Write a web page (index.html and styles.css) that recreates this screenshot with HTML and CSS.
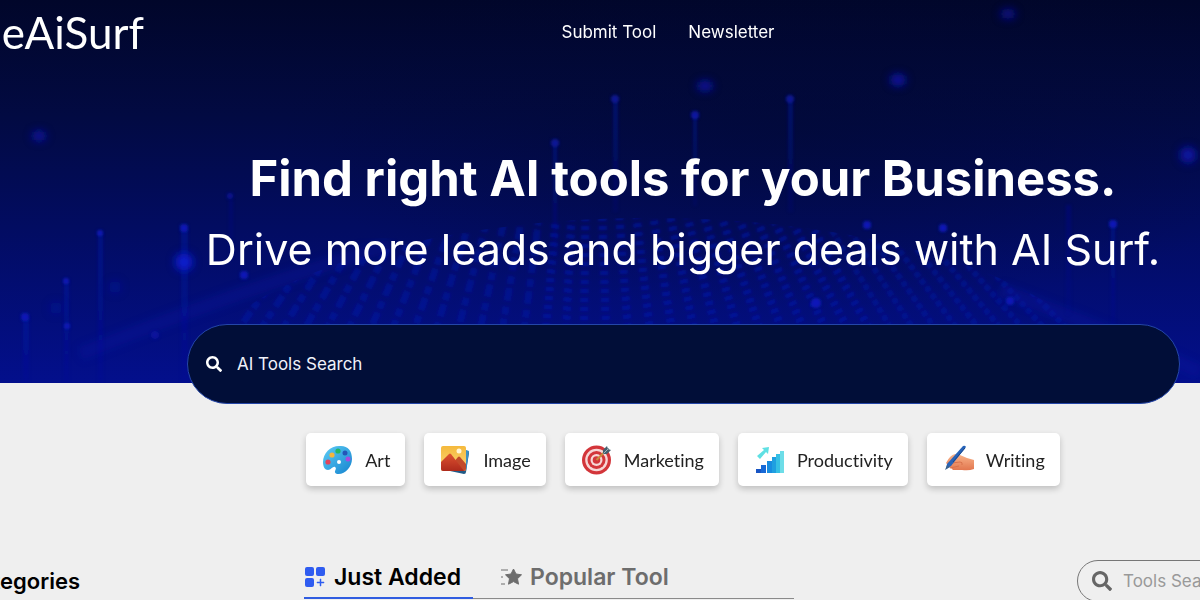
FILE: index.html
```html
<!DOCTYPE html>
<html lang="en">
<head>
    <meta charset="UTF-8">
    <meta name="viewport" content="width=device-width, initial-scale=1.0">
    <title>TheAiSurf</title>
    <link rel="stylesheet" href="styles.css">
</head>
<body>
    <div class="hero">
        <svg class="hero-bg" viewBox="0 0 1200 383" preserveAspectRatio="none" aria-hidden="true">
            <defs>
                <linearGradient id="sky" x1="0" y1="0" x2="0" y2="1">
                    <stop offset="0" stop-color="#01062a"/>
                    <stop offset=".3" stop-color="#020a42"/>
                    <stop offset=".6" stop-color="#020c62"/>
                    <stop offset="1" stop-color="#030f8c"/>
                </linearGradient>
                <radialGradient id="shade">
                    <stop offset="0" stop-color="#010833" stop-opacity=".5"/>
                    <stop offset="1" stop-color="#010833" stop-opacity="0"/>
                </radialGradient>
                <linearGradient id="beam" x1="0" y1="0" x2="0" y2="1">
                    <stop offset="0" stop-color="#0b17b4" stop-opacity=".4"/>
                    <stop offset="1" stop-color="#0b17b4" stop-opacity=".1"/>
                </linearGradient>
                <filter id="soft" x="-5%" y="-5%" width="110%" height="110%"><feGaussianBlur stdDeviation="1.6"/></filter>
                <filter id="glow" x="-5%" y="-5%" width="110%" height="110%"><feGaussianBlur stdDeviation="4"/></filter>
                <clipPath id="hill"><ellipse cx="650" cy="390" rx="460" ry="172"/></clipPath>
            </defs>
            <rect width="1200" height="383" fill="url(#sky)"/>
            <ellipse cx="800" cy="130" rx="520" ry="180" fill="url(#shade)"/>
            <!-- dotted hill -->
            <g clip-path="url(#hill)" filter="url(#soft)" fill="none" stroke="#0918b4">
                <path stroke-width="7" stroke-dasharray="13 6 8 4" opacity=".4" d="M590-170L172 330M590-170L194 330M590-170L216 330M590-170L238 330M590-170L260 330M590-170L282 330M590-170L304 330M590-170L326 330M590-170L348 330M590-170L370 330M590-170L392 330M590-170L414 330M590-170L436 330M590-170L458 330M590-170L480 330M590-170L502 330M590-170L524 330"/>
                <path stroke-width="8" stroke-dasharray="4 5" opacity=".6" d="M590-170L546 330M590-170L566 330M590-170L584 330M590-170L606 330M590-170L628 330M590-170L650 330M590-170L672 330M590-170L694 330M590-170L716 330M590-170L738 330M590-170L760 330M590-170L782 330M590-170L804 330M590-170L826 330M590-170L848 330M590-170L870 330"/>
                <path stroke-width="6" stroke-dasharray="6 3" opacity=".4" d="M590-170L892 330M590-170L914 330M590-170L936 330M590-170L958 330M590-170L980 330M590-170L1002 330M590-170L1024 330M590-170L1046 330M590-170L1068 330M590-170L1090 330M590-170L1112 330"/>
            </g>
            <path d="M80 354Q240 290 390 245M1000 290Q1110 330 1200 372" fill="none" stroke="#0716a4" stroke-width="14" opacity=".3" filter="url(#glow)"/>
            <!-- beams -->
            <g fill="url(#beam)" filter="url(#soft)">
                <rect x="23" y="318" width="6" height="65"/>
                <rect x="64" y="282" width="5" height="101"/>
                <rect x="98" y="234" width="5" height="149"/>
                <rect x="181" y="230" width="7" height="153"/>
                <rect x="229" y="200" width="4" height="60" opacity=".5"/>
                <rect x="553" y="146" width="4" height="110"/>
                <rect x="613" y="102" width="5" height="110"/>
                <rect x="693" y="116" width="4" height="90"/>
                <rect x="788" y="102" width="5" height="110"/>
                <rect x="1066" y="205" width="5" height="110" opacity=".6"/>
                <rect x="1111" y="226" width="4" height="100"/>
            </g>
            <!-- lights -->
            <g fill="#1119b8" filter="url(#soft)">
                <circle cx="25" cy="317" r="4"/>
                <circle cx="66" cy="281" r="3"/>
                <circle cx="67" cy="326" r="3"/>
                <circle cx="100" cy="233" r="3"/>
                <circle cx="184" cy="228" r="4"/>
                <circle cx="244" cy="275" r="4"/>
                <circle cx="155" cy="335" r="4" opacity=".5"/>
                <circle cx="230" cy="196" r="3" opacity=".6"/>
                <circle cx="555" cy="143" r="4" opacity=".7"/>
                <circle cx="615" cy="99" r="4" opacity=".7"/>
                <circle cx="695" cy="115" r="4" opacity=".8"/>
                <circle cx="790" cy="99" r="4" opacity=".7"/>
                <circle cx="867" cy="225" r="4"/>
                <circle cx="943" cy="228" r="4"/>
                <circle cx="1113" cy="224" r="4"/>
                <circle cx="816" cy="303" r="5"/>
                <circle cx="1010" cy="301" r="4"/>
            </g>
            <g fill="#0b13a8" filter="url(#glow)">
                <circle cx="184" cy="262" r="9" fill="#0a1bd0"/>
                <ellipse cx="39" cy="136" rx="7" ry="5"/>
                <ellipse cx="705" cy="86" rx="8" ry="5"/>
                <ellipse cx="898" cy="80" rx="8" ry="6"/>
                <ellipse cx="1008" cy="14" rx="8" ry="5" opacity=".8"/>
                <circle cx="1188" cy="155" r="8"/>
                <circle cx="115" cy="287" r="6" opacity=".5"/>
                <circle cx="56" cy="308" r="6" opacity=".5"/>
            </g>
        </svg>

        <header class="header">
            <a class="logo" href="#"><span>TheAiSurf</span></a>
            <nav class="nav">
                <a href="#">Submit Tool</a>
                <a href="#">Newsletter</a>
            </nav>
        </header>

        <div class="hero-text">
            <h1>Find right AI tools for your Business.</h1>
            <p>Drive more leads and bigger deals with AI Surf.</p>
        </div>
    </div>

    <main>
        <div class="center">
            <label class="search">
                <svg width="16" height="16" viewBox="0 0 512 512" fill="#fff" aria-hidden="true"><path d="M505 442.700 405.300 343c-4.500-4.500-10.600-7-17-7H372c27.600-35.300 44-79.700 44-128C416 93.100 322.900 0 208 0S0 93.100 0 208s93.100 208 208 208c48.300 0 92.700-16.400 128-44v16.300c0 6.400 2.500 12.500 7 17l99.700 99.700c9.400 9.400 24.600 9.400 33.900 0l28.300-28.300c9.400-9.400 9.400-24.600.1-34zM208 336c-70.700 0-128-57.200-128-128 0-70.700 57.200-128 128-128 70.700 0 128 57.200 128 128 0 70.700-57.200 128-128 128z"/></svg>
                <input type="text" placeholder="AI Tools Search" aria-label="AI Tools Search">
            </label>

            <div class="chips">
                <a class="chip" href="#">
                    <svg width="30" height="30" viewBox="0 0 30 30" aria-hidden="true">
                        <defs><linearGradient id="pal" x1="0" y1="0" x2="1" y2="1"><stop offset="0" stop-color="#5ccdf5"/><stop offset="1" stop-color="#1583cf"/></linearGradient></defs>
                        <path d="M18 1C8 0 0 8 0 17c0 5 2 8 5 8 3 0 5-4 7-3 3 2-3 5 2 7 8 1 15-7 15-15C29 6 25 1 18 1zM16 15a2 2 0 1 1 0 4 2 2 0 0 1 0-4z" fill="url(#pal)" fill-rule="evenodd"/>
                        <circle cx="5" cy="17" r="2.600" fill="#e0455c"/>
                        <circle cx="9" cy="10" r="2.600" fill="#f4b53c"/>
                        <circle cx="15" cy="6" r="2.600" fill="#23b566"/>
                        <circle cx="22" cy="8" r="2.500" fill="#2456b8"/>
                        <circle cx="25" cy="14" r="2.500" fill="#a44be0"/>
                    </svg>
                    Art
                </a>
                <a class="chip" href="#">
                    <svg width="30" height="30" viewBox="0 0 30 30" aria-hidden="true">
                        <defs>
                            <linearGradient id="dusk" x1="0" y1="0" x2="0" y2="1"><stop offset="0" stop-color="#f5b93c"/><stop offset="1" stop-color="#fbd97c"/></linearGradient>
                            <linearGradient id="mount" x1="0" y1="0" x2="0" y2="1"><stop offset="0" stop-color="#de5230"/><stop offset="1" stop-color="#ad2a1c"/></linearGradient>
                        </defs>
                        <path d="M10 3l17 3q1 0 1 2l-3 19q0 2-2 2L9 26z" fill="#215a86"/>
                        <path d="M25 5l3 1-3 20z" fill="#3c91c4"/>
                        <rect x="0" y="1" width="25" height="25" rx="2" fill="url(#dusk)"/>
                        <circle cx="18" cy="6" r="2.500" fill="#fff6d8"/>
                        <path d="M12 18l5-6q1-1 2 0l6 7v5q0 2-2 2H10z" fill="#c24a2a"/>
                        <path d="M0 17l8-8q1-1 2 0l13 17H2q-2 0-2-2z" fill="url(#mount)"/>
                    </svg>
                    Image
                </a>
                <a class="chip" href="#">
                    <svg width="30" height="30" viewBox="0 0 30 30" aria-hidden="true">
                        <circle cx="14.500" cy="15" r="14.500" fill="#d3353a"/>
                        <circle cx="14.500" cy="15" r="11.300" fill="#f7d6d6"/>
                        <circle cx="14.500" cy="15" r="9" fill="#d3353a"/>
                        <circle cx="14.500" cy="15" r="6" fill="#f7d6d6"/>
                        <circle cx="14.500" cy="15" r="3.800" fill="#d3353a"/>
                        <path d="M14.500 15l9-9" stroke="#c98b3c" stroke-width="2"/>
                        <path d="M21 5l4-4 1 3 3 1-4 4h-4z" fill="#46606f"/>
                        <path d="M21.500 8.500L27 3" stroke="#9db2bd"/>
                    </svg>
                    Marketing
                </a>
                <a class="chip" href="#">
                    <svg width="30" height="30" viewBox="0 0 30 30" aria-hidden="true">
                        <path d="M2 11l7-6-2-2 7-1-1 7-2-2-6 7z" fill="#5fe0e3"/>
                        <rect x="1" y="24" width="5" height="4" fill="#1855c4"/>
                        <rect x="6" y="20" width="5" height="8" fill="#1769d6"/>
                        <rect x="12" y="16" width="5" height="12" fill="#188ce0"/>
                        <rect x="17" y="12" width="4" height="16" fill="#1f9fe0"/>
                        <rect x="21" y="9" width="4" height="19" fill="#35bfe4"/>
                        <rect x="25" y="6" width="4" height="22" fill="#6ddde8"/>
                    </svg>
                    Productivity
                </a>
                <a class="chip" href="#">
                    <svg width="30" height="30" viewBox="0 0 30 30" aria-hidden="true">
                        <defs><linearGradient id="skin" x1="0" y1="0" x2="0" y2="1"><stop offset="0" stop-color="#f9b48a"/><stop offset="1" stop-color="#e2764e"/></linearGradient></defs>
                        <path d="M2 18q4-8 9-9l5 1 7 3 7 2v9q-5 2-12 1l-9 0-2-2q-2 0-2-2z" fill="url(#skin)"/>
                        <path d="M6 23l9-2M8 18l8-1q3 0 2 3" fill="none" stroke="#d9724c"/>
                        <path d="M19 1q2-1 3 1L7 21l-5 3 1-5z" fill="#2763b8"/>
                        <path d="M21 3L9 17" stroke="#1b4687"/>
                        <path d="M3 20l3 2-5 3z" fill="#37628f"/>
                    </svg>
                    Writing
                </a>
            </div>
        </div>

        <div class="listing">
            <div class="side"><h2>Categories</h2></div>
            <div class="tabs">
                <button class="tab active" type="button">
                    <svg width="22" height="22" viewBox="0 0 22 22" fill="#2f5cf0" aria-hidden="true">
                        <rect x="1" y="1" width="9" height="9" rx="2"/>
                        <rect x="12" y="1" width="9" height="9" rx="2"/>
                        <rect x="1" y="12" width="9" height="9" rx="2"/>
                        <path d="M16 13h1v3h3v1h-3v3h-1v-3h-3v-1h3z" stroke="#2f5cf0" stroke-width=".5"/>
                    </svg>
                    Just Added
                </button>
                <button class="tab" type="button">
                    <svg width="22" height="22" viewBox="0 0 22 22" aria-hidden="true">
                        <path d="M13.500 3l2.500 5 5.500.8-4 3.900 1 5.500-5-2.600-5 2.600 1-5.500-4-3.900L11 8z" fill="#6d6d6d" stroke="#6d6d6d" stroke-linejoin="round"/>
                        <path d="M1 4h7M1 11h2M1 18h4" stroke="#6d6d6d"/>
                    </svg>
                    Popular Tool
                </button>
            </div>
            <div class="filter">
                <label class="filter-box">
                    <svg width="20" height="20" viewBox="0 0 512 512" fill="#666" aria-hidden="true"><path d="M505 442.700 405.300 343c-4.500-4.500-10.600-7-17-7H372c27.600-35.300 44-79.700 44-128C416 93.100 322.900 0 208 0S0 93.100 0 208s93.100 208 208 208c48.300 0 92.700-16.400 128-44v16.300c0 6.400 2.500 12.500 7 17l99.700 99.700c9.400 9.400 24.600 9.400 33.900 0l28.300-28.300c9.400-9.400 9.400-24.600.1-34zM208 336c-70.700 0-128-57.200-128-128 0-70.700 57.200-128 128-128 70.700 0 128 57.200 128 128 0 70.700-57.200 128-128 128z"/></svg>
                    <input type="text" placeholder="Tools Search" aria-label="Tools Search">
                </label>
            </div>
        </div>
    </main>
</body>
</html>
```
FILE: styles.css
```css
* {
    box-sizing: border-box;
}

body {
    margin: 0;
    background: #efefef;
    font-family: "Inter", "Liberation Sans", sans-serif;
    overflow: hidden;
}

a {
    color: inherit;
    text-decoration: none;
}

.hero {
    position: relative;
    height: 383px;
    color: #fff;
    background: #020c62;
}

.hero-bg {
    position: absolute;
    top: 0;
    left: 0;
    width: 100%;
    height: 100%;
}

.header {
    position: relative;
    display: flex;
    align-items: center;
    height: 64px;
}

.logo {
    display: flex;
    justify-content: flex-end;
    width: 144px;
    overflow: hidden;
    font-family: "Lato", sans-serif;
    font-size: 44px;
    line-height: 66px;
}

.nav {
    display: flex;
    flex: 1;
    justify-content: center;
    gap: 32px;
    padding-right: 8px;
    font-size: 17px;
}

.hero-text {
    position: relative;
    padding: 80px 0 0 166px;
    text-align: center;
    white-space: nowrap;
}

.hero-text h1 {
    margin: 0;
    font-size: 49px;
    line-height: 70px;
}

.hero-text p {
    margin: 0;
    font-size: 43px;
    line-height: 70px;
}

.center {
    position: relative;
    margin-top: -59px;
    padding-left: 166px;
}

.search {
    display: flex;
    align-items: center;
    gap: 15px;
    height: 80px;
    margin: 0 20px 0 21px;
    padding: 0 18px;
    background: #010e38;
    border: 1px solid #2446a8;
    border-radius: 40px;
}

.search input {
    flex: 1;
    padding: 0;
    border: none;
    outline: none;
    background: none;
    color: #fff;
    font: 17px "Inter", sans-serif;
}

.search input::placeholder {
    color: #f0f2fa;
}

.chips {
    display: flex;
    justify-content: center;
    gap: 19px;
    margin-top: 29px;
}

.chip {
    display: flex;
    align-items: center;
    gap: 12px;
    height: 53px;
    padding: 0 15px 0 17px;
    background: #fff;
    border-radius: 5px;
    box-shadow: 0 3px 6px rgba(0, 0, 0, 0.2);
    color: #222;
    font-family: "Lato", sans-serif;
    font-size: 18px;
    font-variant-ligatures: none;
}

.listing {
    display: flex;
    margin-top: 74px;
}

.side {
    display: flex;
    justify-content: flex-end;
    width: 80px;
    overflow: hidden;
}

.side h2 {
    margin: 0;
    font-size: 22px;
    font-weight: 600;
    line-height: 42px;
}

.tabs {
    display: flex;
    align-items: flex-start;
    width: 490px;
    height: 39px;
    margin-left: 224px;
    border-bottom: 1px solid #8a8a8a;
}

.tab {
    display: flex;
    align-items: center;
    gap: 8px;
    height: 39px;
    margin-right: 27px;
    padding: 0 12px 3px 0;
    background: none;
    border: none;
    border-bottom: 2px solid transparent;
    color: #6d6d6d;
    font: 600 23px "Inter", sans-serif;
    white-space: nowrap;
}

.tab.active {
    color: #000;
    border-bottom-color: #2f5ce0;
}

.filter {
    display: flex;
    width: 123px;
    margin-left: auto;
    overflow: hidden;
}

.filter-box {
    display: flex;
    flex-shrink: 0;
    align-items: center;
    gap: 11px;
    width: 266px;
    height: 42px;
    padding: 0 14px;
    border: 1px solid #777;
    border-radius: 21px;
}

.filter-box input {
    width: 180px;
    padding: 0;
    border: none;
    outline: none;
    background: none;
    font: 17px "Inter", sans-serif;
}

.filter-box input::placeholder {
    color: #999;
}
```
